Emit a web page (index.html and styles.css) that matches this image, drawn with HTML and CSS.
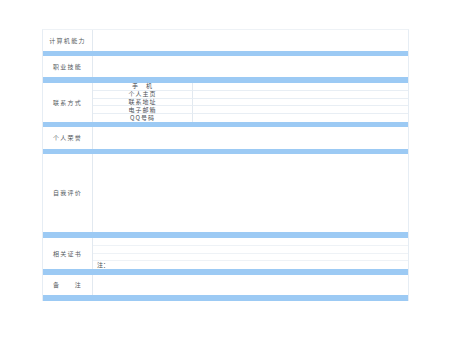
FILE: index.html
```html
<!DOCTYPE html>
<html lang="zh">
<head>
<meta charset="utf-8">
<link rel="stylesheet" href="styles.css">
</head>
<body>
<div class="sheet">
  <div class="row h-comp">
    <div class="label">计算机能力</div>
    <div class="content"></div>
  </div>
  <div class="bar b5"></div>
  <div class="row h-skill">
    <div class="label">职业技能</div>
    <div class="content"></div>
  </div>
  <div class="bar b6"></div>
  <div class="row h-contact">
    <div class="label">联系方式</div>
    <div class="content contact">
      <div class="sub">手　机</div><div class="val"></div>
      <div class="sub">个人主页</div><div class="val"></div>
      <div class="sub">联系地址</div><div class="val"></div>
      <div class="sub">电子邮箱</div><div class="val"></div>
      <div class="sub">QQ号码</div><div class="val"></div>
    </div>
  </div>
  <div class="bar b5"></div>
  <div class="row h-honor">
    <div class="label">个人荣誉</div>
    <div class="content"></div>
  </div>
  <div class="bar b5"></div>
  <div class="row h-eval">
    <div class="label">自我评价</div>
    <div class="content"></div>
  </div>
  <div class="bar b6"></div>
  <div class="row h-cert">
    <div class="label">相关证书</div>
    <div class="content certs">
      <div class="line"></div>
      <div class="line"></div>
      <div class="line"></div>
      <div class="line note">注：</div>
    </div>
  </div>
  <div class="bar b6"></div>
  <div class="row h-remark">
    <div class="label">备　　注</div>
    <div class="content"></div>
  </div>
  <div class="bar b6"></div>
</div>
</body>
</html>
```

FILE: styles.css
```css
* { box-sizing: border-box; }
html, body { margin: 0; padding: 0; background: #ffffff; }
body {
  width: 450px;
  height: 340px;
  overflow: hidden;
  font-family: "Noto Sans CJK SC", "Noto Sans", sans-serif;
  color: #555a60;
}
.sheet {
  margin: 29px 0 0 42px;
  width: 367px;
  display: flex;
  flex-direction: column;
  border-left: 1px solid #e6edf4;
  border-right: 1px solid #e6edf4;
  border-top: 1px solid #eef2f6;
}
.row {
  display: grid;
  grid-template-columns: 50px 1fr;
}
.label {
  border-right: 1px solid #e2e9f0;
  display: flex;
  align-items: center;
  justify-content: center;
  font-size: 6px;
  letter-spacing: 1.3px;
  line-height: 1;
}
.bar { background: #9ccaf4; }
.b5 { height: 5px; }
.b6 { height: 6px; }
.h-comp { height: 21px; }
.h-skill { height: 21px; }
.h-contact { height: 39px; }
.h-honor { height: 22px; }
.h-eval { height: 78px; }
.h-cert { height: 31px; }
.h-remark { height: 20px; }
.contact {
  display: grid;
  grid-template-columns: 100px 1fr;
  grid-template-rows: repeat(5, 1fr);
}
.sub {
  border-right: 1px solid #e2e9f0;
  border-bottom: 1px solid #e8eef4;
  display: flex;
  align-items: center;
  justify-content: center;
  font-size: 6px;
  letter-spacing: 1px;
  line-height: 1;
  color: #4a4f55;
}
.val { border-bottom: 1px solid #e8eef4; }
.contact .sub:nth-last-child(2), .contact .val:last-child { border-bottom: none; }
.certs {
  display: grid;
  grid-template-rows: repeat(4, 1fr);
}
.line { border-bottom: 1px solid #eef2f6; }
.line:last-child { border-bottom: none; }
.note {
  font-size: 6px;
  line-height: 1;
  display: flex;
  align-items: center;
  padding-left: 4px;
  color: #4a4f55;
}
```
